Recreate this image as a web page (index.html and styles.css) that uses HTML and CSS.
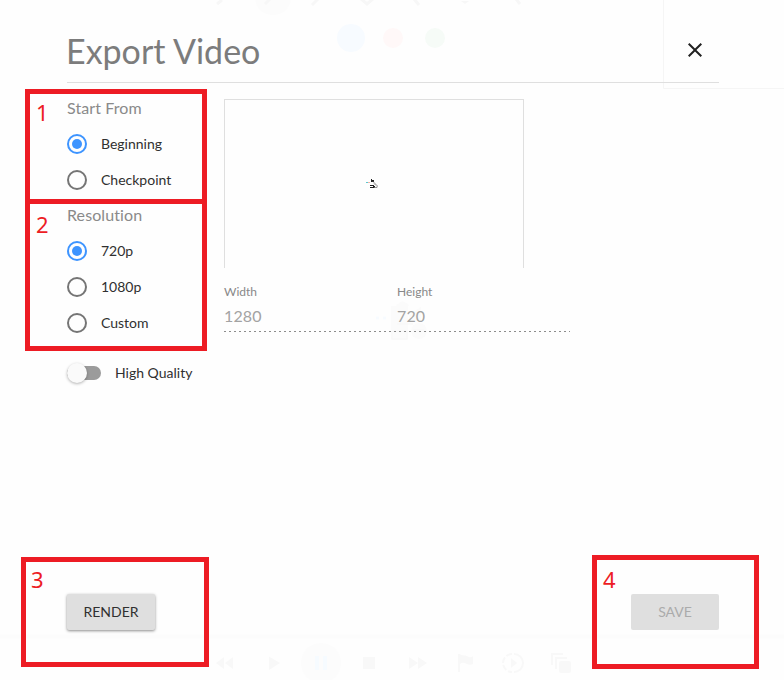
FILE: index.html
```html
<!DOCTYPE html>
<html lang="en">
<head>
<meta charset="utf-8">
<title>Export Video</title>
<link rel="stylesheet" href="styles.css">
</head>
<body>
<svg class="backdrop" width="784" height="680" viewBox="0 0 784 680" aria-hidden="true">
  <circle cx="273" cy="-3" r="18" fill="#fcfcfc"/>
  <g fill="none" stroke="#f7f7f7" stroke-width="3">
    <path d="M217 4l5-4M265 4l5-5M312 5l6-6M360-2l7 6 7-6M414-1l5 6M516-1l4 5"/>
  </g>
  <path d="M461 1h8l-4 3z" fill="#f7f7f7"/>
  <circle cx="351" cy="38" r="14" fill="#f7fbff"/>
  <circle cx="393" cy="38" r="10" fill="#fff8f8"/>
  <circle cx="435" cy="38" r="10" fill="#f6fbf7"/>
  <path d="M663.500 0v88.500H784" fill="none" stroke="#f5f5f5"/>
  <path d="M0 636.500h784" stroke="#fcfcfc" stroke-width="4"/>
  <g fill="#fbfbfb">
    <path d="M391 306h17v34h-17zM396 306q7-9 13 0zM409 315l12-8v14h-12z"/>
    <circle cx="419" cy="331" r="8"/>
  </g>
  <path d="M376 316.500h3v3h-3zM383 316.500h3v3h-3z" fill="#f7fbff"/>
  <path d="M392 331h15v8h-15zM413 330h11M397 324h16" fill="none" stroke="#f7f7f7"/>
  <circle cx="321" cy="663" r="20" fill="#fcfcfc"/>
  <path d="M315 656h4v14h-4zM323 656h4v14h-4z" fill="#f6fbff"/>
  <g fill="#f8f8f8">
    <path d="M224 657v12l-8-6zM233 657v12l-8-6zM269 656.500v13.500l11-7zM363 657h12v12h-12zM409 657v12l9-6zM418 657v12l9-6z"/>
    <path d="M458 654h2l1 1q5 0 8 2 3 1 4-1v8q-4 2-8-1-3-1-5 1v8h-2z"/>
    <path d="M511 658v10l6-5z"/>
    <rect x="559" y="661" width="12" height="12" rx="2"/>
  </g>
  <g fill="none" stroke="#f8f8f8" stroke-width="2">
    <path d="M514 654a9 9 0 0 1 0 18"/>
    <path d="M512 654a9 9 0 0 0 0 18" stroke-dasharray="6 2"/>
    <path d="M552 665v-11h11M556 669v-11h11"/>
  </g>
</svg>

<main class="dialog">
  <header class="dialog-header">
    <h1>Export Video</h1>
    <button class="close" aria-label="Close">
      <svg width="24" height="24" viewBox="0 0 24 24"><path d="M19 6.410L17.590 5 12 10.590 6.410 5 5 6.410 10.590 12 5 17.590 6.410 19 12 13.410 17.590 19 19 17.590 13.410 12z"/></svg>
    </button>
  </header>

  <div class="content">
    <section class="options">
      <div class="group">
        <h2>Start From</h2>
        <div class="radio checked"><span class="dot"></span>Beginning</div>
        <div class="radio"><span class="dot"></span>Checkpoint</div>
      </div>
      <div class="group">
        <h2>Resolution</h2>
        <div class="radio checked"><span class="dot"></span>720p</div>
        <div class="radio"><span class="dot"></span>1080p</div>
        <div class="radio"><span class="dot"></span>Custom</div>
      </div>
      <div class="toggle"><span class="track"><span class="knob"></span></span>High Quality</div>
    </section>

    <section class="output">
      <div class="preview">
        <svg width="14" height="10" viewBox="0 0 14 10">
          <path d="M0 3.500h2" stroke="#5bc8cf"/><path d="M2 3.500h2" stroke="#f2b5a8"/>
          <path d="M5 0h1v1h2v2H5zM4 6h4v1h1v2H4V8h3V7H4z" fill="#222"/>
          <path d="M7 2.500l3 3q2 1 1 3H8M8 4.500l2 2" fill="none" stroke="#777" stroke-width=".8"/>
        </svg>
      </div>
      <div class="fields">
        <div class="field"><span class="label">Width</span><span class="value">1280</span></div>
        <div class="field"><span class="label">Height</span><span class="value">720</span></div>
      </div>
    </section>
  </div>

  <footer class="actions">
    <button class="btn raised">RENDER</button>
    <button class="btn disabled" disabled>SAVE</button>
  </footer>
</main>

<div class="callout callout-start">1</div>
<div class="callout callout-resolution">2</div>
<div class="callout callout-render">3</div>
<div class="callout callout-save">4</div>
</body>
</html>
```
FILE: styles.css
```css
* {
  box-sizing: border-box;
}

body {
  position: relative;
  width: 784px;
  height: 680px;
  margin: 0;
  overflow: hidden;
  background: #fefefe;
  color: #303030;
  font: 14px/20px Lato, "Liberation Sans", sans-serif;
}

.backdrop {
  position: absolute;
  top: 0;
  left: 0;
}

.dialog {
  position: relative;
  display: flex;
  flex-direction: column;
  height: 680px;
  padding: 20px 65px 50px 67px;
}

.dialog-header {
  display: flex;
  align-items: center;
  justify-content: space-between;
  height: 63px;
  padding-right: 12px;
  border-bottom: 1px solid #dfdfdf;
}

h1 {
  margin: 0 0 0 -1px;
  color: #7c7c7c;
  font-size: 34px;
  font-weight: 400;
  line-height: 40px;
}

.close {
  width: 24px;
  height: 24px;
  margin-top: -2px;
  padding: 0;
  border: 0;
  background: none;
  fill: #212121;
}

.close svg {
  display: block;
}

.content {
  display: flex;
  flex: 1;
  padding-top: 16px;
}

.options {
  width: 157px;
}

.group {
  height: 107px;
}

.group + .group {
  height: 155px;
}

h2 {
  height: 27px;
  margin: 0;
  color: #8a8a8a;
  font-size: 16px;
  font-weight: 400;
  letter-spacing: 0.1px;
  line-height: 18px;
}

.radio {
  display: flex;
  align-items: center;
  gap: 14px;
  height: 36px;
}

.dot {
  display: flex;
  align-items: center;
  justify-content: center;
  width: 20px;
  height: 20px;
  border: 2px solid #757575;
  border-radius: 50%;
}

.checked .dot {
  border-color: #3d94ff;
}

.checked .dot::after {
  width: 10px;
  height: 10px;
  border-radius: 50%;
  background: #3d94ff;
  content: "";
}

.toggle {
  display: flex;
  align-items: center;
  gap: 14px;
  height: 24px;
}

.track {
  display: flex;
  align-items: center;
  width: 34px;
  height: 14px;
  border-radius: 7px;
  background: #9b9b9b;
}

.knob {
  width: 20px;
  height: 20px;
  border-radius: 50%;
  background: #fafafa;
  box-shadow: 0 1px 3px rgba(0, 0, 0, 0.3);
}

.preview {
  display: flex;
  align-items: center;
  justify-content: center;
  width: 300px;
  height: 169px;
  padding: 0 2px 1px 0;
  border: 1px solid #dfdfdf;
  border-bottom: 0;
}

.fields {
  display: flex;
  width: 346px;
  height: 64px;
  padding-top: 14px;
  background: repeating-linear-gradient(90deg, #8c8c8c 0 2px, transparent 2px 5px) 0 100% / 100% 1px no-repeat;
}

.field {
  display: flex;
  flex: none;
  flex-direction: column;
  width: 173px;
}

.label {
  height: 24px;
  color: #888;
  font-size: 12px;
}

.value {
  color: #a3a3a3;
  font-size: 16px;
  letter-spacing: 0.1px;
}

.actions {
  display: flex;
  justify-content: space-between;
}

.btn {
  width: 88px;
  height: 36px;
  padding: 0;
  border: 0;
  border-radius: 2px;
  background: #dfdfdf;
  color: #303030;
  font: inherit;
}

.raised {
  box-shadow: 0 1px 3px rgba(0, 0, 0, 0.45);
}

.disabled {
  color: #ababab;
}

.callout {
  position: absolute;
  border: 5px solid #ed1c24;
  color: #ed1c24;
  font: normal 400 22px/28px "Noto Sans", "Open Sans", sans-serif;
}

.callout-start {
  top: 89px;
  left: 25px;
  width: 182px;
  height: 115px;
  padding: 4px 6px;
}

.callout-resolution {
  top: 199px;
  left: 25px;
  width: 182px;
  height: 152px;
  padding: 6px 6px;
}

.callout-render {
  top: 557px;
  left: 21px;
  width: 188px;
  height: 110px;
  padding: 3px 5px;
}

.callout-save {
  top: 555px;
  left: 592px;
  width: 167px;
  height: 114px;
  padding: 5px 6px;
}
```
